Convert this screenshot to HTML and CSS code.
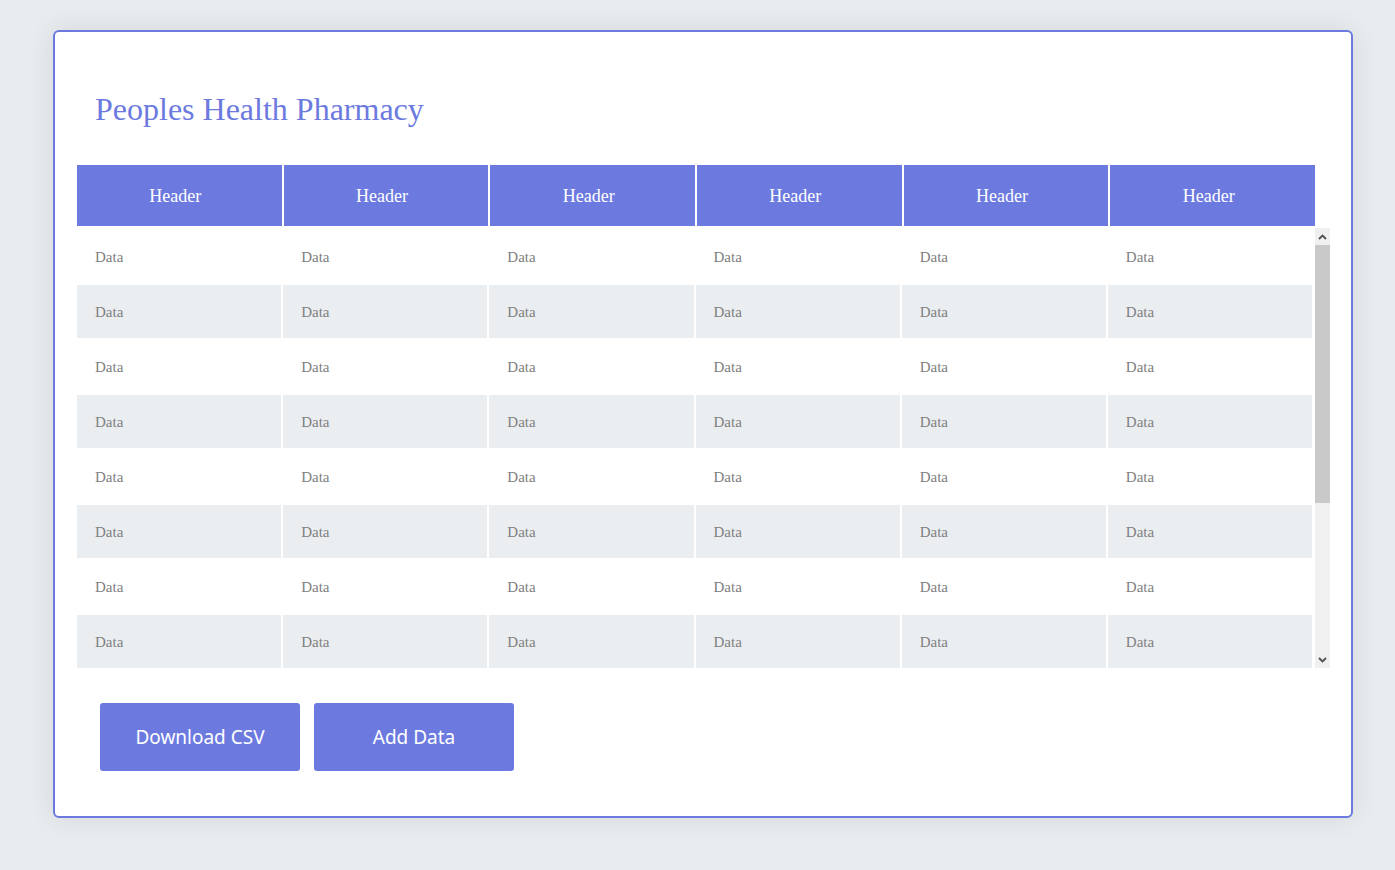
FILE: index.html
```html
<!DOCTYPE html>
<html>
<head>
<meta charset="utf-8">
<link rel="stylesheet" href="styles.css">
</head>
<body>
<div class="card">
  <h1 class="title">Peoples Health Pharmacy</h1>
  <div class="table">
    <div class="head">
      <div class="th">Header</div><div class="th">Header</div><div class="th">Header</div>
      <div class="th">Header</div><div class="th">Header</div><div class="th">Header</div>
    </div>
    <div class="body">
      <div class="rows">
        <div class="row"><div class="td">Data</div><div class="td">Data</div><div class="td">Data</div><div class="td">Data</div><div class="td">Data</div><div class="td">Data</div></div>
        <div class="row"><div class="td">Data</div><div class="td">Data</div><div class="td">Data</div><div class="td">Data</div><div class="td">Data</div><div class="td">Data</div></div>
        <div class="row"><div class="td">Data</div><div class="td">Data</div><div class="td">Data</div><div class="td">Data</div><div class="td">Data</div><div class="td">Data</div></div>
        <div class="row"><div class="td">Data</div><div class="td">Data</div><div class="td">Data</div><div class="td">Data</div><div class="td">Data</div><div class="td">Data</div></div>
        <div class="row"><div class="td">Data</div><div class="td">Data</div><div class="td">Data</div><div class="td">Data</div><div class="td">Data</div><div class="td">Data</div></div>
        <div class="row"><div class="td">Data</div><div class="td">Data</div><div class="td">Data</div><div class="td">Data</div><div class="td">Data</div><div class="td">Data</div></div>
        <div class="row"><div class="td">Data</div><div class="td">Data</div><div class="td">Data</div><div class="td">Data</div><div class="td">Data</div><div class="td">Data</div></div>
        <div class="row"><div class="td">Data</div><div class="td">Data</div><div class="td">Data</div><div class="td">Data</div><div class="td">Data</div><div class="td">Data</div></div>
      </div>
      <div class="scrollbar">
        <div class="sb-btn">
          <svg width="9" height="6" viewBox="0 0 9 6"><path d="M1 5 L4.5 1.5 L8 5" fill="none" stroke="#505050" stroke-width="1.8"/></svg>
        </div>
        <div class="sb-track"><div class="sb-thumb"></div></div>
        <div class="sb-btn">
          <svg width="9" height="6" viewBox="0 0 9 6"><path d="M1 1 L4.5 4.5 L8 1" fill="none" stroke="#505050" stroke-width="1.8"/></svg>
        </div>
      </div>
    </div>
  </div>
  <div class="actions">
    <button class="btn">Download CSV</button>
    <button class="btn">Add Data</button>
  </div>
</div>
</body>
</html>
```
FILE: styles.css
```css
html, body {
  margin: 0;
  padding: 0;
}
body {
  background: #e9ecef;
  font-family: "Liberation Serif", "Times New Roman", serif;
  padding: 30px 43px 0 53px;
  height: 870px;
  box-sizing: border-box;
}
.card {
  width: 1300px;
  height: 788px;
  box-sizing: border-box;
  background: #fff;
  border: 2px solid #6c7ae0;
  border-radius: 6px;
  box-shadow: 0 0 28px rgba(0, 0, 0, 0.09);
  padding: 0 19px 0 22px;
}
.title {
  margin: 57px 0 0 18px;
  height: 40px;
  line-height: 40px;
  font-size: 32px;
  font-weight: normal;
  color: #6c7ae0;
}
.table {
  margin-top: 36px;
  width: 1253px;
}
.head {
  display: grid;
  grid-template-columns: repeat(6, 1fr);
  column-gap: 2px;
  width: 1238px;
  height: 61px;
}
.th {
  background: #6c7ae0;
  color: #fff;
  font-size: 18px;
  display: flex;
  align-items: center;
  justify-content: center;
  padding: 2px 8px 0 0;
  box-sizing: border-box;
}
.body {
  margin-top: 2px;
  height: 440px;
  display: flex;
}
.rows {
  width: 1238px;
  padding-top: 2px;
  box-sizing: border-box;
  overflow: hidden;
}
.row {
  display: grid;
  grid-template-columns: repeat(6, 1fr);
  column-gap: 2px;
  height: 53px;
  margin-bottom: 2px;
  width: 1235px;
}
.row:nth-child(even) .td {
  background: #ebeef1;
}
.td {
  background: #fff;
  color: #808080;
  font-size: 15px;
  display: flex;
  align-items: center;
  padding-left: 18px;
  padding-top: 2px;
  box-sizing: border-box;
}
.scrollbar {
  width: 15px;
  display: flex;
  flex-direction: column;
  background: #f0f0f0;
}
.sb-btn {
  height: 17px;
  display: flex;
  align-items: center;
  justify-content: center;
}
.sb-track {
  flex: 1;
}
.sb-thumb {
  height: 258px;
  background: #c9c9c9;
}
.actions {
  display: flex;
  gap: 14px;
  margin: 35px 0 0 23px;
}
.btn {
  width: 200px;
  height: 68px;
  border: none;
  border-radius: 3px;
  background: #6c7ae0;
  color: #fff;
  font-family: "Noto Sans", "Open Sans", sans-serif;
  font-size: 19px;
  padding: 0;
  cursor: pointer;
}
```
